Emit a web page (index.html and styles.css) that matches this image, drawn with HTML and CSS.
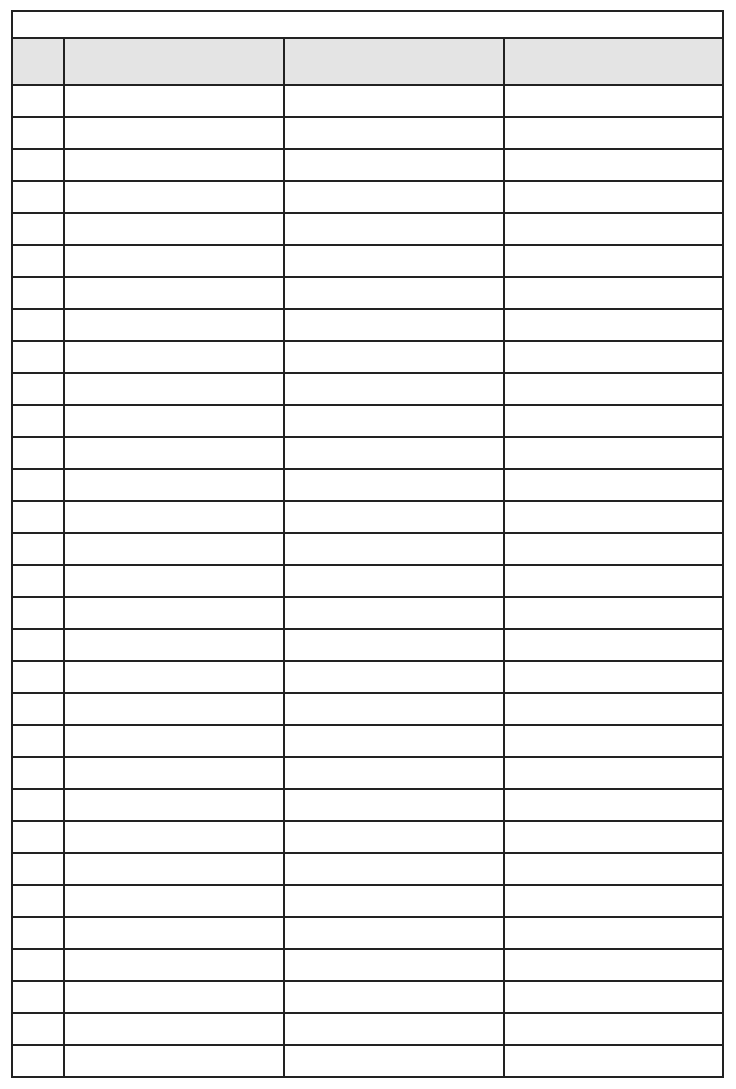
FILE: index.html
```html
<!DOCTYPE html>
<html>
<head>
<meta charset="utf-8">
<link rel="stylesheet" href="styles.css">
</head>
<body>
<div class="sheet">
  <div class="title"></div>
  <div class="cell head"></div><div class="cell head"></div><div class="cell head"></div><div class="cell head"></div>
  <!-- 1-10 -->
  <div class="cell"></div><div class="cell"></div><div class="cell"></div><div class="cell"></div>
  <div class="cell"></div><div class="cell"></div><div class="cell"></div><div class="cell"></div>
  <div class="cell"></div><div class="cell"></div><div class="cell"></div><div class="cell"></div>
  <div class="cell"></div><div class="cell"></div><div class="cell"></div><div class="cell"></div>
  <div class="cell"></div><div class="cell"></div><div class="cell"></div><div class="cell"></div>
  <div class="cell"></div><div class="cell"></div><div class="cell"></div><div class="cell"></div>
  <div class="cell"></div><div class="cell"></div><div class="cell"></div><div class="cell"></div>
  <div class="cell"></div><div class="cell"></div><div class="cell"></div><div class="cell"></div>
  <div class="cell"></div><div class="cell"></div><div class="cell"></div><div class="cell"></div>
  <div class="cell"></div><div class="cell"></div><div class="cell"></div><div class="cell"></div>
  <!-- 11-20 -->
  <div class="cell"></div><div class="cell"></div><div class="cell"></div><div class="cell"></div>
  <div class="cell"></div><div class="cell"></div><div class="cell"></div><div class="cell"></div>
  <div class="cell"></div><div class="cell"></div><div class="cell"></div><div class="cell"></div>
  <div class="cell"></div><div class="cell"></div><div class="cell"></div><div class="cell"></div>
  <div class="cell"></div><div class="cell"></div><div class="cell"></div><div class="cell"></div>
  <div class="cell"></div><div class="cell"></div><div class="cell"></div><div class="cell"></div>
  <div class="cell"></div><div class="cell"></div><div class="cell"></div><div class="cell"></div>
  <div class="cell"></div><div class="cell"></div><div class="cell"></div><div class="cell"></div>
  <div class="cell"></div><div class="cell"></div><div class="cell"></div><div class="cell"></div>
  <div class="cell"></div><div class="cell"></div><div class="cell"></div><div class="cell"></div>
  <!-- 21-30 -->
  <div class="cell"></div><div class="cell"></div><div class="cell"></div><div class="cell"></div>
  <div class="cell"></div><div class="cell"></div><div class="cell"></div><div class="cell"></div>
  <div class="cell"></div><div class="cell"></div><div class="cell"></div><div class="cell"></div>
  <div class="cell"></div><div class="cell"></div><div class="cell"></div><div class="cell"></div>
  <div class="cell"></div><div class="cell"></div><div class="cell"></div><div class="cell"></div>
  <div class="cell"></div><div class="cell"></div><div class="cell"></div><div class="cell"></div>
  <div class="cell"></div><div class="cell"></div><div class="cell"></div><div class="cell"></div>
  <div class="cell"></div><div class="cell"></div><div class="cell"></div><div class="cell"></div>
  <div class="cell"></div><div class="cell"></div><div class="cell"></div><div class="cell"></div>
  <div class="cell"></div><div class="cell"></div><div class="cell"></div><div class="cell"></div>
  <!-- 31 -->
  <div class="cell"></div><div class="cell"></div><div class="cell"></div><div class="cell"></div>
</div>
</body>
</html>
```

FILE: styles.css
```css
html, body {
  margin: 0;
  padding: 0;
  background: #ffffff;
  font-family: "Liberation Sans", Arial, sans-serif;
}

body {
  padding: 10px 0 0 11px;
}

.sheet {
  display: grid;
  grid-template-columns: 52px 220px 220px 219px;
  grid-template-rows: 27px 47px;
  grid-auto-rows: 32px;
  width: 713px;
  box-sizing: border-box;
  border-top: 2px solid #222222;
  border-left: 2px solid #222222;
}

.title {
  grid-column: 1 / -1;
  box-sizing: border-box;
  border-right: 2px solid #222222;
  border-bottom: 2px solid #222222;
}

.cell {
  box-sizing: border-box;
  border-right: 2px solid #222222;
  border-bottom: 2px solid #222222;
}

.head {
  background: #e4e4e4;
}
```
